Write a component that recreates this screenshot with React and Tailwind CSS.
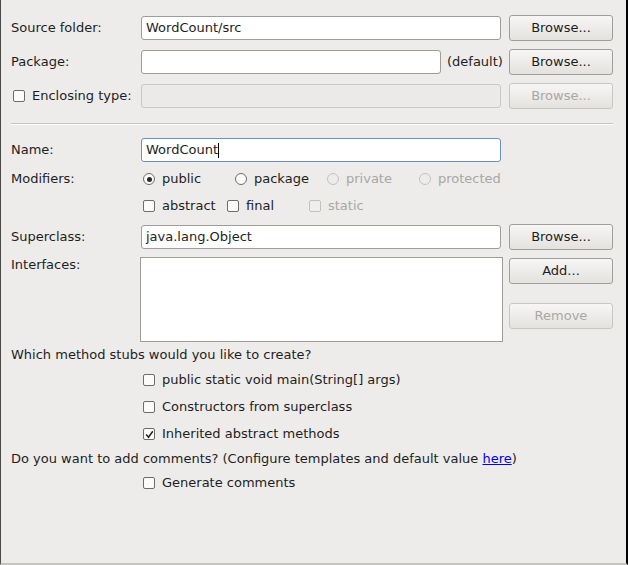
import React from 'react';

const font = { fontFamily: '"DejaVu Sans", Verdana, sans-serif' };

const Button = ({ children, disabled }) => (
  <button
    disabled={disabled}
    className={`w-[104px] h-[26px] shrink-0 rounded-[3px] border text-[13px] bg-gradient-to-b from-[#f7f6f5] to-[#e4e2df] ${
      disabled ? 'border-[#c9c6c2] text-[#a9a7a4]' : 'border-[#a19e99] text-[#1e1e1e]'
    }`}
  >
    {children}
  </button>
);

const Check = ({ checked, disabled }) => (
  <span
    className={`w-[12px] h-[12px] shrink-0 rounded-[2px] border flex items-center justify-center ${
      disabled ? 'border-[#c4c1bd] bg-[#efeeec]' : 'border-[#6f6c68] bg-[#fbfbfb]'
    }`}
  >
    {checked && (
      <svg width="9" height="9" viewBox="0 0 9 9">
        <path d="M1.2 4.6 L3.5 7.3 L7.8 1.2" fill="none" stroke="#222" strokeWidth="1.5" />
      </svg>
    )}
  </span>
);

const Radio = ({ checked, disabled }) => (
  <span
    className={`w-[12px] h-[12px] shrink-0 rounded-full border flex items-center justify-center ${
      disabled ? 'border-[#c4c1bd]' : 'border-[#6f6c68] bg-[#fbfbfb]'
    }`}
  >
    {checked && <span className="w-[5px] h-[5px] rounded-full bg-[#2a2a2a]" />}
  </span>
);

const Field = ({ value, w = 'w-[360px]', focus, disabled, caret }) => (
  <div
    className={`${w} h-[24px] shrink-0 rounded-[3px] border flex items-center px-[4px] text-[13px] ${
      disabled
        ? 'bg-[#ebeae8] border-[#cbc8c4]'
        : focus
        ? 'bg-white border-[#6d8fc2]'
        : 'bg-white border-[#a09c97]'
    }`}
  >
    {value}
    {caret && <span className="w-px h-[15px] bg-black" />}
  </div>
);

const Label = ({ children }) => <div className="w-[130px] shrink-0">{children}</div>;

export default function App() {
  return (
    <div
      style={font}
      className="w-[628px] h-[565px] bg-[#edeceb] text-[13px] text-[#1e1e1e] border-l border-l-[#4b4b4b] border-r-2 border-r-black border-b-2 border-b-[#c6c4c1] overflow-hidden"
    >
      <div className="pl-[10px] pt-[15px]">
        <div className="flex items-center h-[26px]">
          <Label>Source folder:</Label>
          <Field value="WordCount/src" />
          <div className="w-[8px]" />
          <Button>Browse...</Button>
        </div>

        <div className="flex items-center h-[26px] mt-[8px]">
          <Label>Package:</Label>
          <Field value="" w="w-[300px]" />
          <div className="w-[68px] pl-[6px]">(default)</div>
          <Button>Browse...</Button>
        </div>

        <div className="flex items-center h-[26px] mt-[8px]">
          <div className="w-[130px] shrink-0 flex items-center gap-[7px] pl-[2px]">
            <Check />
            <span>Enclosing type:</span>
          </div>
          <Field value="" disabled />
          <div className="w-[8px]" />
          <Button disabled>Browse...</Button>
        </div>

        <div className="mt-[14px] w-[602px] h-px bg-[#c9c6c2] border-b border-white box-content" />

        <div className="flex items-center h-[26px] mt-[12px]">
          <Label>Name:</Label>
          <Field value="WordCount" focus caret />
        </div>

        <div className="flex items-center h-[20px] mt-[6px]">
          <Label>Modifiers:</Label>
          <div className="flex items-center pl-[2px]">
            <div className="w-[92px] flex items-center gap-[7px]">
              <Radio checked />
              <span>public</span>
            </div>
            <div className="w-[92px] flex items-center gap-[7px]">
              <Radio />
              <span>package</span>
            </div>
            <div className="w-[92px] flex items-center gap-[7px] text-[#a9a7a4]">
              <Radio disabled />
              <span>private</span>
            </div>
            <div className="flex items-center gap-[7px] text-[#a9a7a4]">
              <Radio disabled />
              <span>protected</span>
            </div>
          </div>
        </div>

        <div className="flex items-center h-[20px] mt-[7px]">
          <Label />
          <div className="flex items-center pl-[2px]">
            <div className="w-[84px] flex items-center gap-[7px]">
              <Check />
              <span>abstract</span>
            </div>
            <div className="w-[82px] flex items-center gap-[7px]">
              <Check />
              <span>final</span>
            </div>
            <div className="flex items-center gap-[7px] text-[#a9a7a4]">
              <Check disabled />
              <span>static</span>
            </div>
          </div>
        </div>

        <div className="flex items-center h-[26px] mt-[8px]">
          <Label>Superclass:</Label>
          <Field value="java.lang.Object" />
          <div className="w-[8px]" />
          <Button>Browse...</Button>
        </div>

        <div className="flex mt-[7px]">
          <div className="w-[129px] shrink-0 leading-[16px]">Interfaces:</div>
          <div className="w-[363px] h-[85px] shrink-0 bg-white border border-[#a09d99]" />
          <div className="w-[6px]" />
          <div className="flex flex-col pt-[1px]">
            <Button>Add...</Button>
            <div className="h-[19px]" />
            <Button disabled>Remove</Button>
          </div>
        </div>

        <div className="mt-[5px] leading-[16px]">Which method stubs would you like to create?</div>

        <div className="pl-[132px] flex flex-col">
          <div className="flex items-center gap-[7px] h-[16px] mt-[9px]">
            <Check />
            <span>public static void main(String[] args)</span>
          </div>
          <div className="flex items-center gap-[7px] h-[16px] mt-[11px]">
            <Check />
            <span>Constructors from superclass</span>
          </div>
          <div className="flex items-center gap-[7px] h-[16px] mt-[11px]">
            <Check checked />
            <span>Inherited abstract methods</span>
          </div>
        </div>

        <div className="mt-[9px] leading-[16px]">
          Do you want to add comments? (Configure templates and default value{' '}
          <a className="text-[#0000ee] underline">here</a>)
        </div>

        <div className="pl-[132px] flex items-center gap-[7px] h-[16px] mt-[8px]">
          <Check />
          <span>Generate comments</span>
        </div>
      </div>
    </div>
  );
}
